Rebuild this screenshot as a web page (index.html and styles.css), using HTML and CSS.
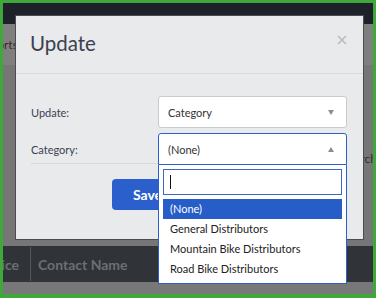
FILE: index.html
```html
<!DOCTYPE html>
<html lang="en">
<head>
    <meta charset="UTF-8">
    <title>Update</title>
    <link rel="stylesheet" href="styles.css">
</head>
<body>
    <div class="frame">
        <div class="page">
            <div class="topbar"></div>
            <div class="crumbs"><span class="crumb">Reports</span></div>
            <div class="content"><span class="search-link">Search</span></div>
            <div class="table-head">
                <div class="th th-first">Invoice</div>
                <div class="th">Contact Name</div>
            </div>
            <div class="page-foot"></div>

            <div class="modal">
                <div class="modal-head">
                    <h2 class="modal-title">Update</h2>
                    <svg class="close" width="10" height="10" viewBox="0 0 10 10">
                        <path d="M1 1 L9 9 M9 1 L1 9" stroke="#b9babd" stroke-width="1.6" fill="none"/>
                    </svg>
                </div>
                <div class="modal-form">
                    <div class="row">
                        <label class="label">Update:</label>
                        <div class="select">
                            <span>Category</span>
                            <span class="arrow down"></span>
                        </div>
                    </div>
                    <div class="row">
                        <label class="label">Category:</label>
                        <div class="select open">
                            <span>(None)</span>
                            <span class="arrow up"></span>
                            <div class="dropdown">
                                <div class="search"><span class="caret"></span></div>
                                <ul class="options">
                                    <li class="option active">(None)</li>
                                    <li class="option">General Distributors</li>
                                    <li class="option">Mountain Bike Distributors</li>
                                    <li class="option">Road Bike Distributors</li>
                                </ul>
                            </div>
                        </div>
                    </div>
                </div>
                <div class="modal-foot">
                    <button class="btn save">Save</button>
                    <button class="btn cancel">Cancel</button>
                </div>
            </div>
        </div>
    </div>
</body>
</html>
```

FILE: styles.css
```css
*{
    box-sizing: border-box;
}
body{
    margin:0;
    font-family: Lato, "Open Sans", sans-serif;
}
.frame{
    width:376px;
    height:298px;
    border:3px solid #3fa83a;
    border-bottom-width:4px;
}
.page{
    position:relative;
    height:100%;
    overflow:hidden;
    display:flex;
    flex-direction:column;
    background:#777777;
}
.topbar{
    height:21px;
    background:#1e2129;
}
.crumbs{
    height:41px;
    background:#7f7f7f;
    display:flex;
    align-items:center;
    font-size:12px;
    color:#3f2628;
}
.crumb{
    margin-left:-26px;
}
.content{
    flex:1;
    background:#767676;
    display:flex;
    justify-content:flex-end;
    padding-top:86px;
    font-size:12px;
    color:#3f2628;
}
.search-link{
    margin-right:-4px;
}
.table-head{
    height:36px;
    background:#303338;
    display:flex;
    align-items:stretch;
    font-size:14px;
    font-weight:700;
    color:#6c6f74;
}
.th{
    display:flex;
    align-items:center;
    padding-left:7px;
    white-space:nowrap;
}
.th-first{
    width:28px;
    padding:0 11px 0 0;
    justify-content:flex-end;
    border-right:1px solid #55585c;
    margin:1px 0;
}
.page-foot{
    height:12px;
    background:#787878;
}

/* modal */
.modal{
    position:absolute;
    left:12px;
    top:12px;
    width:349px;
    height:225px;
    background:#e9eaec;
    border:1px solid #4b4c4e;
    color:#3c4151;
}
.modal-head{
    height:58px;
    padding:15px 16px 0 14px;
    display:flex;
    justify-content:space-between;
    align-items:flex-start;
    border-bottom:1px solid #d8d9db;
}
.modal-title{
    margin:0;
    font-size:20.5px;
    line-height:25px;
    font-weight:400;
}
.close{
    margin-top:4px;
}
.modal-form{
    height:90px;
    margin:0 16px 0 15px;
    padding-top:22px;
    border-bottom:1px solid #d8d9db;
}
.row{
    display:flex;
    align-items:center;
    height:32px;
}
.row + .row{
    margin-top:5px;
}
.label{
    width:127px;
    font-size:11px;
}
.select{
    position:relative;
    z-index:1;
    width:189px;
    height:32px;
    display:flex;
    align-items:center;
    justify-content:space-between;
    padding:0 12px 0 9px;
    background:#fff;
    border:1px solid #c9cacc;
    border-radius:3px;
    font-size:11px;
    color:#333;
}
.select.open{
    border-color:#2b5fcf;
    border-radius:3px 3px 0 0;
}
.arrow{
    width:0;
    height:0;
    border-left:3.5px solid transparent;
    border-right:3.5px solid transparent;
}
.arrow.down{
    border-top:5px solid #8c8d8f;
}
.arrow.up{
    border-bottom:5px solid #8c8d8f;
}
.dropdown{
    position:absolute;
    top:calc(100% + 1px);
    left:-1px;
    right:-1px;
    background:#fff;
    border:1px solid #2b5fcf;
    border-top:none;
    padding:4px 4px 4px;
}
.search{
    height:26px;
    border:1px solid #3f66c4;
    display:flex;
    align-items:center;
    padding-left:6px;
}
.caret{
    width:1px;
    height:14px;
    background:#111;
}
.options{
    list-style:none;
    margin:4px 0 0;
    padding:0;
}
.option{
    height:20px;
    line-height:20px;
    padding-left:7px;
    color:#222;
    white-space:nowrap;
}
.option.active{
    background:#265dc7;
    color:#fff;
}
.modal-foot{
    display:flex;
    justify-content:center;
    gap:8px;
    padding-top:15px;
}
.btn{
    height:31px;
    border:none;
    border-radius:4px;
    font-family:inherit;
    font-size:14px;
    font-weight:700;
    color:#fff;
    background:#2a5fcc;
}
.save{
    width:71px;
}
.cancel{
    width:76px;
}
```
